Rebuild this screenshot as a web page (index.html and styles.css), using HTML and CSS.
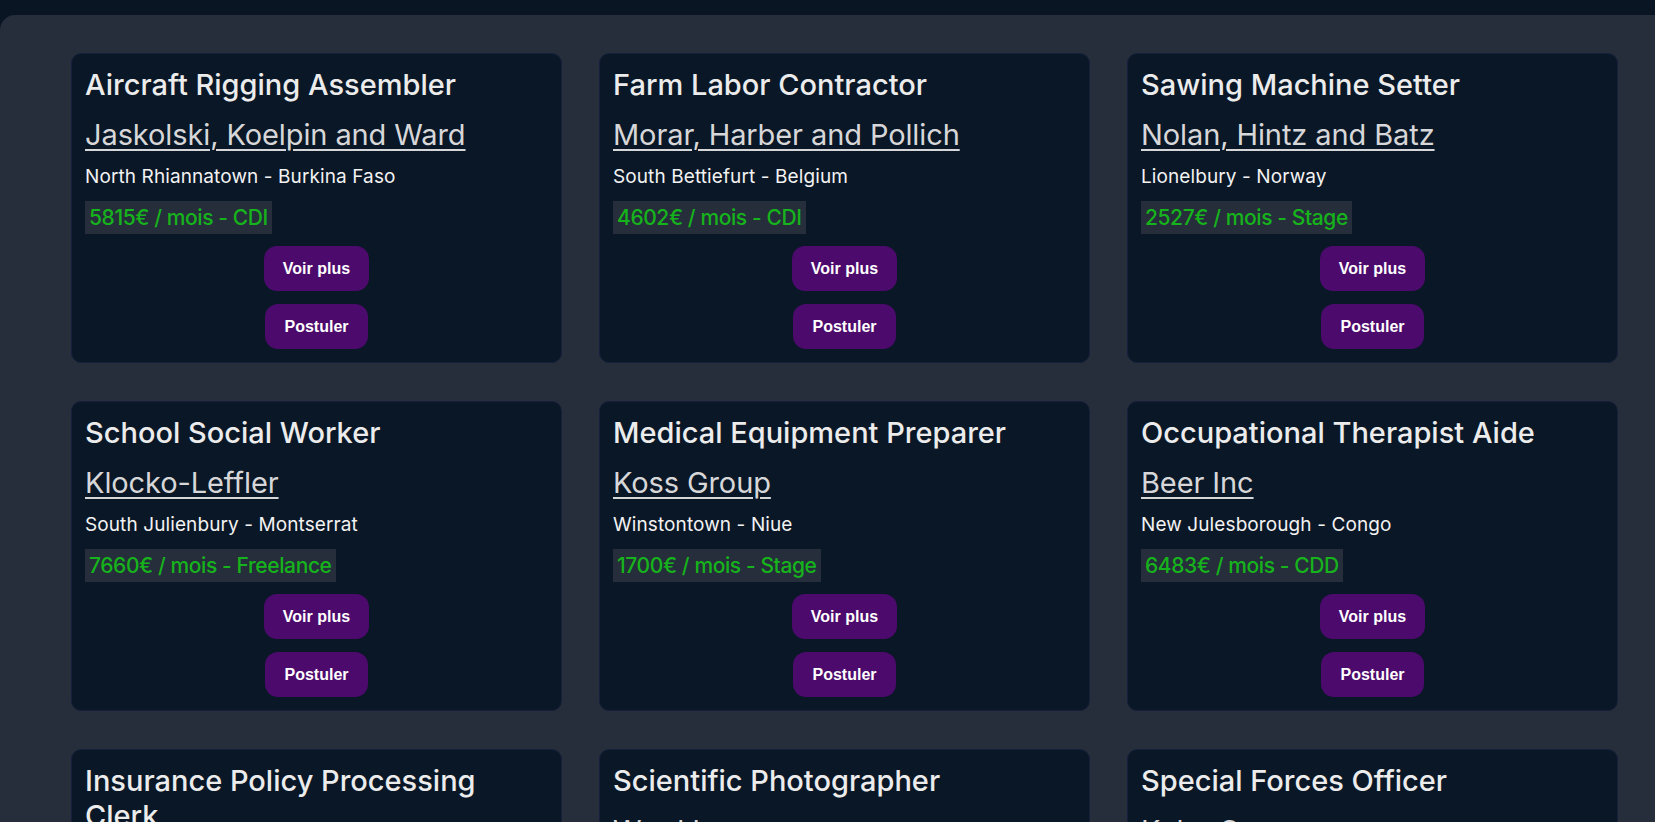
FILE: index.html
```html
<!DOCTYPE html>
<html lang="fr">
<head>
<meta charset="utf-8">
<title>Offres</title>
<link rel="stylesheet" href="styles.css">
</head>
<body>
<div class="topbar"></div>
<main class="board">
  <section class="grid">
    <article class="card">
      <h2 class="title">Aircraft Rigging Assembler</h2>
      <a class="company" href="#">Jaskolski, Koelpin and Ward</a>
      <p class="place">North Rhiannatown - Burkina Faso</p>
      <span class="salary">5815€ / mois - CDI</span>
      <button class="btn">Voir plus</button>
      <button class="btn">Postuler</button>
    </article>
    <article class="card">
      <h2 class="title">Farm Labor Contractor</h2>
      <a class="company" href="#">Morar, Harber and Pollich</a>
      <p class="place">South Bettiefurt - Belgium</p>
      <span class="salary">4602€ / mois - CDI</span>
      <button class="btn">Voir plus</button>
      <button class="btn">Postuler</button>
    </article>
    <article class="card">
      <h2 class="title">Sawing Machine Setter</h2>
      <a class="company" href="#">Nolan, Hintz and Batz</a>
      <p class="place">Lionelbury - Norway</p>
      <span class="salary">2527€ / mois - Stage</span>
      <button class="btn">Voir plus</button>
      <button class="btn">Postuler</button>
    </article>
    <article class="card">
      <h2 class="title">School Social Worker</h2>
      <a class="company" href="#">Klocko-Leffler</a>
      <p class="place">South Julienbury - Montserrat</p>
      <span class="salary">7660€ / mois - Freelance</span>
      <button class="btn">Voir plus</button>
      <button class="btn">Postuler</button>
    </article>
    <article class="card">
      <h2 class="title">Medical Equipment Preparer</h2>
      <a class="company" href="#">Koss Group</a>
      <p class="place">Winstontown - Niue</p>
      <span class="salary">1700€ / mois - Stage</span>
      <button class="btn">Voir plus</button>
      <button class="btn">Postuler</button>
    </article>
    <article class="card">
      <h2 class="title">Occupational Therapist Aide</h2>
      <a class="company" href="#">Beer Inc</a>
      <p class="place">New Julesborough - Congo</p>
      <span class="salary">6483€ / mois - CDD</span>
      <button class="btn">Voir plus</button>
      <button class="btn">Postuler</button>
    </article>
    <article class="card">
      <h2 class="title">Insurance Policy Processing Clerk</h2>
      <a class="company" href="#">Hane LLC</a>
      <p class="place">Port Elmore - Chile</p>
      <span class="salary">3200€ / mois - CDI</span>
      <button class="btn">Voir plus</button>
      <button class="btn">Postuler</button>
    </article>
    <article class="card">
      <h2 class="title">Scientific Photographer</h2>
      <a class="company" href="#">Ward Inc</a>
      <p class="place">Lake Ayla - Peru</p>
      <span class="salary">2900€ / mois - CDD</span>
      <button class="btn">Voir plus</button>
      <button class="btn">Postuler</button>
    </article>
    <article class="card">
      <h2 class="title">Special Forces Officer</h2>
      <a class="company" href="#">Kuhn Group</a>
      <p class="place">East Mara - Japan</p>
      <span class="salary">4100€ / mois - Stage</span>
      <button class="btn">Voir plus</button>
      <button class="btn">Postuler</button>
    </article>
  </section>
</main>
</body>
</html>
```

FILE: styles.css
```css
* { box-sizing: border-box; }

html, body {
  margin: 0;
  padding: 0;
  height: 100%;
  overflow: hidden;
  background: #0a1523;
}

body {
  font-family: Inter, "Liberation Sans", sans-serif;
}

.topbar {
  height: 15px;
  background: #0a1523;
}

.board {
  background: #252e3a;
  border-top-left-radius: 15px;
  min-height: calc(100% - 15px);
  padding: 38px 37px 0 71px;
}

.grid {
  display: grid;
  grid-template-columns: repeat(3, 1fr);
  column-gap: 37px;
  row-gap: 38px;
}

.card {
  background: #0a1726;
  border: 1px solid #16203c;
  border-radius: 10px;
  padding: 13px 13px 13px;
  display: flex;
  flex-direction: column;
  align-items: flex-start;
}

.title {
  margin: 0;
  font-size: 29px;
  line-height: 35px;
  font-weight: 500;
  color: #ececec;
}

.company {
  margin-top: 15px;
  font-size: 29px;
  line-height: 35px;
  font-weight: 400;
  color: #d7d7d9;
  text-decoration: underline;
  text-decoration-thickness: 2px;
  text-underline-offset: 4px;
  letter-spacing: -0.1px;
}

.place {
  margin: 13px 0 0;
  font-size: 19px;
  line-height: 23px;
  color: #f2f2f2;
  letter-spacing: 0.1px;
}

.salary {
  margin-top: 13px;
  background: #252e3a;
  color: #17b31c;
  font-size: 21px;
  font-weight: 500;
  line-height: 33px;
  height: 33px;
  padding: 0 4px;
  letter-spacing: -0.4px;
}

.btn {
  align-self: center;
  margin-top: 12px;
  font-family: "Liberation Sans", Arial, sans-serif;
  font-weight: 700;
  font-size: 16px;
  line-height: 19px;
  color: #ffffff;
  background: #4b0a6c;
  border: none;
  border-radius: 13px;
  padding: 13px 19px;
}

.btn + .btn {
  margin-top: 13px;
}
```
